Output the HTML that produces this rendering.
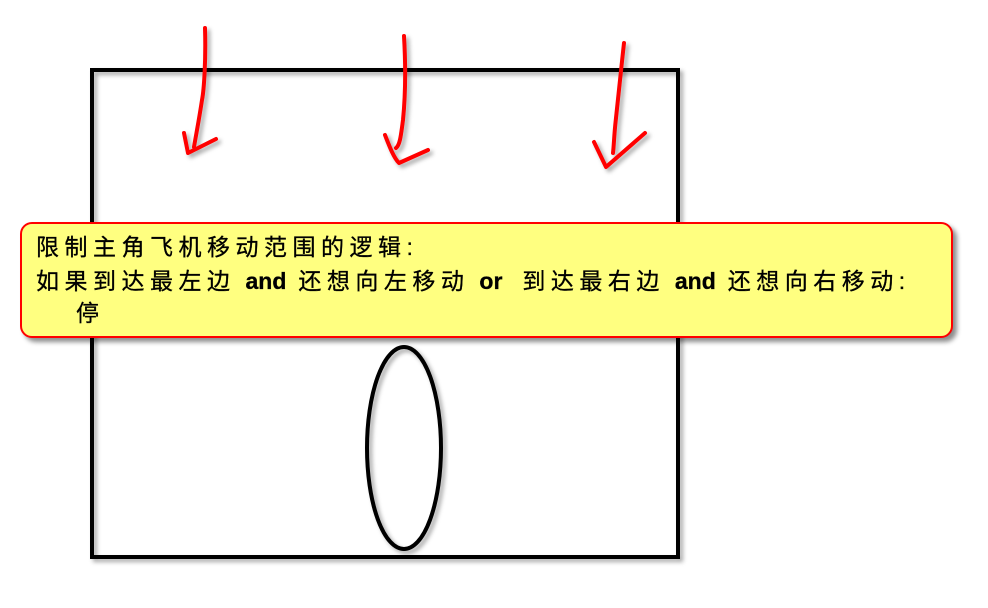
<!DOCTYPE html>
<html><head><meta charset="utf-8"><style>
html,body{margin:0;padding:0;background:#fff;width:988px;height:608px;overflow:hidden;position:relative}
svg{position:absolute;left:0;top:0}
.call{position:absolute;left:20px;top:222px;width:929px;height:112px;background:#ffff80;border:2px solid #f00;border-radius:12px;box-shadow:4px 4px 5px rgba(0,0,0,.45);box-sizing:content-box}
.t{position:absolute;left:14px;font-family:"Liberation Sans","Noto Sans CJK SC",sans-serif;font-size:23px;color:#000;white-space:nowrap;line-height:26px;-webkit-text-stroke:0.3px #000}
.c{letter-spacing:5.5px}
b{font-weight:bold;font-size:23px;margin:0 12px 0 10px}
</style></head><body>
<svg width="988" height="608">
<defs><filter id="s"><feDropShadow dx="3" dy="3" stdDeviation="2" flood-opacity="0.35"/></filter></defs>
<rect x="92" y="70" width="586" height="487" fill="none" stroke="#000" stroke-width="4" filter="url(#s)"/>
<ellipse cx="404" cy="448" rx="37" ry="101" fill="none" stroke="#000" stroke-width="4" filter="url(#s)"/>
<g fill="none" stroke="#f00" stroke-width="4" stroke-linecap="round" stroke-linejoin="round" filter="url(#s)">
<path d="M205 28 C206 60 204 90 202 100 C199 120 196 135 194 147"/>
<path d="M184 133 L188 153 L216 139"/>
<path d="M404 36 C406 70 405 100 403 120 C401 135 400 145 396 148"/>
<path d="M385 135 C390 148 394 158 399 163 L428 150"/>
<path d="M624 43 C621 70 618 100 616 118 C614 135 614 145 613 153"/>
<path d="M594 142 L606 167 L645 133"/>
</g>
</svg>
<div class="call">
<div class="t c" style="top:10px">限制主角飞机移动范围的逻辑:</div>
<div class="t" style="top:44px"><span class="c">如果到达最左边</span><b>and</b><span class="c">还想向左移动</span><b>or</b><span style="margin-left:8px" class="c">到达最右边</span><b>and</b><span class="c">还想向右移动:</span></div>
<div class="t c" style="top:76px;left:54px">停</div>
</div>
</body></html>
